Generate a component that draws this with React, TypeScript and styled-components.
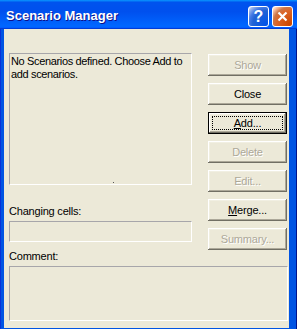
import styled, { createGlobalStyle } from 'styled-components';

const GlobalStyle = createGlobalStyle`
  html, body {
    margin: 0;
    padding: 0;
    background: #ffffff;
  }
  * {
    box-sizing: border-box;
  }
`;

const Window = styled.div`
  width: 297px;
  height: 329px;
  display: flex;
  flex-direction: column;
  background: #0054e3;
  font-family: Tahoma, 'Liberation Sans', Arial, sans-serif;
  font-size: 11px;
  letter-spacing: -0.2px;
  color: #000;
`;

const TitleBar = styled.div`
  height: 29px;
  flex: none;
  display: flex;
  align-items: flex-start;
  padding: 0 4px 0 6px;
  background: linear-gradient(
    180deg,
    #0997ff,
    #0053ee 8%,
    #0050ee 40%,
    #0066ff 88%,
    #0066ff 93%,
    #005bff 95%,
    #003dd7 96%,
    #003dd7
  );
`;

const Title = styled.div`
  flex: 1;
  padding-top: 8px;
  font-family: 'Liberation Sans', Arial, sans-serif;
  font-weight: bold;
  font-size: 13px;
  letter-spacing: 0;
  color: #fff;
  text-shadow: 1px 1px #0f1089;
`;

const CaptionButtons = styled.div`
  display: flex;
  gap: 3px;
  padding-top: 6px;
`;

const CaptionButton = styled.div<{ $close?: boolean }>`
  width: 21px;
  height: 21px;
  border: 1px solid #fff;
  border-radius: 3px;
  display: flex;
  align-items: center;
  justify-content: center;
  background: ${({ $close }) =>
    $close
      ? 'radial-gradient(circle at 90% 90%, #cc4600 0, #dc6527 55%, #cd7546 70%, #ffccb2 90%, #fff 100%)'
      : 'radial-gradient(circle at 90% 90%, #0054e9 0, #2263d5 55%, #4479e4 70%, #a3bbec 90%, #fff 100%)'};
  color: #fff;
  font-family: 'Liberation Sans', Arial, sans-serif;
  font-weight: bold;
  font-size: 16px;
  letter-spacing: 0;
  line-height: 1;
`;

const Frame = styled.div`
  flex: 1;
  display: flex;
  padding: 0 8px 3px 4px;
  background: #0054e3;
  box-shadow: inset 1px 0 #0831d9, inset -1px -1px #00138c;
`;

const Body = styled.div`
  flex: 1;
  background: #ece9d8;
  padding: 24px 1px 7px 5px;
  display: grid;
  grid-template-columns: 183px 80px;
  column-gap: 16px;
  grid-template-areas:
    'list buttons'
    'chlabel buttons'
    'field buttons'
    'clabel buttons'
    'comment comment';
  align-content: start;
`;

const Sunken = styled.div<{ $area: string; $height: number }>`
  grid-area: ${({ $area }) => $area};
  height: ${({ $height }) => $height}px;
  border-top: 1px solid #a7a6aa;
  border-left: 1px solid #a7a6aa;
  border-right: 1px solid #fff;
  border-bottom: 1px solid #fff;
  background: #ece9d8;
  position: relative;
`;

const ListText = styled.div`
  padding: 1px 0 0 1px;
  line-height: 13px;
  letter-spacing: -0.35px;
`;

const FocusDot = styled.span`
  position: absolute;
  left: 103px;
  bottom: 1px;
  width: 1px;
  height: 1px;
  background: #555;
`;

const Label = styled.div<{ $area: string; $top: number }>`
  grid-area: ${({ $area }) => $area};
  padding-top: ${({ $top }) => $top}px;
  padding-bottom: 3px;
  line-height: 13px;
`;

const ButtonColumn = styled.div`
  grid-area: buttons;
  display: flex;
  flex-direction: column;
  gap: 7px;
  padding-top: 1px;
`;

const Button = styled.div<{ $disabled?: boolean; $default?: boolean }>`
  width: 79px;
  height: 22px;
  display: flex;
  align-items: center;
  justify-content: center;
  position: relative;
  background: #ece9d8;
  color: ${({ $disabled }) => ($disabled ? '#aca899' : '#000')};
  text-shadow: ${({ $disabled }) => ($disabled ? '1px 1px #fff' : 'none')};
  border: ${({ $default }) => ($default ? '1px solid #000' : 'none')};
  box-shadow: inset -1px -1px #716f64, inset 1px 1px #fff, inset -2px -2px #aca899,
    inset 2px 2px #f1efe2;

  u {
    text-decoration: underline;
    text-underline-offset: 1px;
  }
`;

const FocusRing = styled.span`
  position: absolute;
  inset: 3px;
  border: 1px dotted #000;
`;

const buttons = [
  { label: 'Show', disabled: true },
  { label: 'Close' },
  { label: 'Add...', key: 'A', focused: true },
  { label: 'Delete', disabled: true },
  { label: 'Edit...', disabled: true },
  { label: 'Merge...', key: 'M' },
  { label: 'Summary...', disabled: true },
];

export default function App() {
  return (
    <>
      <GlobalStyle />
      <Window>
        <TitleBar>
          <Title>Scenario Manager</Title>
          <CaptionButtons>
            <CaptionButton>?</CaptionButton>
            <CaptionButton $close>
              <svg width="11" height="11" viewBox="0 0 11 11">
                <path d="M1.5 1.5 L9.5 9.5 M9.5 1.5 L1.5 9.5" stroke="#fff" strokeWidth="2.2" />
              </svg>
            </CaptionButton>
          </CaptionButtons>
        </TitleBar>
        <Frame>
          <Body>
            <Sunken $area="list" $height={132}>
              <ListText>No Scenarios defined. Choose Add to add scenarios.</ListText>
              <FocusDot />
            </Sunken>
            <Label $area="chlabel" $top={20}>
              Changing cells:
            </Label>
            <Sunken $area="field" $height={21} />
            <Label $area="clabel" $top={8}>
              Comment:
            </Label>
            <Sunken $area="comment" $height={55} />
            <ButtonColumn>
              {buttons.map((b) => (
                <Button key={b.label} $disabled={b.disabled} $default={b.focused}>
                  {b.focused && <FocusRing />}
                  {b.key ? (
                    <span>
                      <u>{b.label.slice(0, 1)}</u>
                      {b.label.slice(1)}
                    </span>
                  ) : (
                    b.label
                  )}
                </Button>
              ))}
            </ButtonColumn>
          </Body>
        </Frame>
      </Window>
    </>
  );
}
